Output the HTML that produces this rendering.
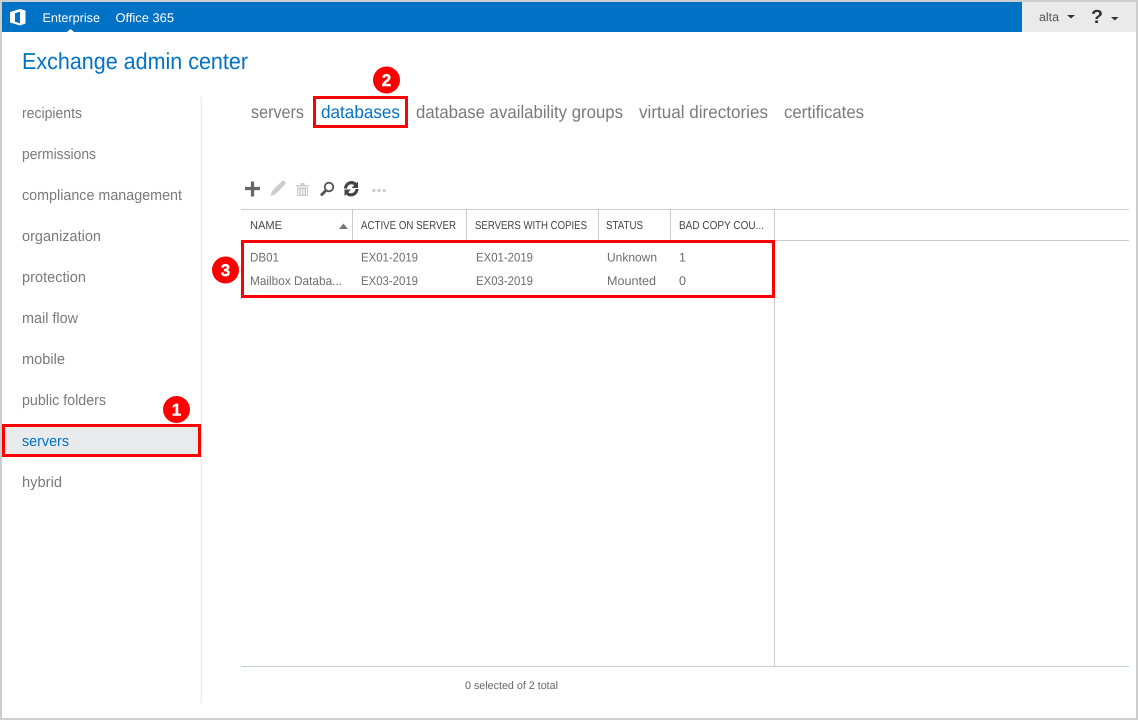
<!DOCTYPE html>
<html><head><meta charset="utf-8"><title>Exchange admin center</title>
<style>
html,body{margin:0;padding:0;width:1138px;height:720px;overflow:hidden;background:#fff}
svg{display:block;position:absolute;left:0;top:0}
text{font-family:"Liberation Sans",sans-serif}
.nav{font-size:15px;fill:#7a7a7a}
.tab{font-size:18px;fill:#7a7a7a}
.hd{font-size:11.500px;fill:#444}
.td{font-size:12.500px;fill:#6e6e6e}
.bn{font-size:17px;font-weight:bold;fill:#fff;text-anchor:middle;stroke:#fff;stroke-width:.4px}
</style></head><body>
<svg width="1138" height="720" viewBox="0 0 1138 720" xmlns="http://www.w3.org/2000/svg" text-rendering="geometricPrecision">
<defs><linearGradient id="g" x1="0" x2="1" y1="0" y2="0"><stop offset="0" stop-color="#fff"/><stop offset="1" stop-color="#e6e6e6"/></linearGradient></defs>
<rect width="1138" height="720" fill="#fff"/>
<!-- top bar -->
<rect x="2" y="2" width="1020" height="30" fill="#0072c6"/>
<rect x="1022" y="2" width="114" height="30" fill="#eaeaea"/>
<path d="M67 32l3.500-3 3.500 3z" fill="#fff"/>
<path fill="#fff" fill-rule="evenodd" d="M10 12L20 9l5.500 1.500V23.500L20 25.500 10 22.500zM15 13.200v8.600l5 1.500V11.800z"/>
<text x="42.500" y="22" font-size="12.500" fill="#fff" textLength="57.500" lengthAdjust="spacingAndGlyphs">Enterprise</text>
<text x="115.500" y="22" font-size="12.500" fill="#fff" textLength="58.500" lengthAdjust="spacingAndGlyphs">Office 365</text>
<text x="1039" y="21" font-size="12" fill="#555" textLength="20" lengthAdjust="spacingAndGlyphs">alta</text>
<path d="M1067 15h8l-4 3.500z" fill="#333"/>
<text x="1091" y="23" font-size="19" font-weight="bold" fill="#333" textLength="12" lengthAdjust="spacingAndGlyphs">?</text>
<path d="M1111 17h7.500l-3.750 3.500z" fill="#333"/>
<!-- title -->
<text x="22" y="69" font-size="23" fill="#0072c6" textLength="226" lengthAdjust="spacingAndGlyphs">Exchange admin center</text>
<!-- sidebar -->
<rect x="200" y="97" width="2" height="606" fill="url(#g)"/>
<rect x="3" y="425" width="197" height="31" fill="#e9eaec"/>
<text class="nav" x="22" y="118" textLength="60" lengthAdjust="spacingAndGlyphs">recipients</text>
<text class="nav" x="22" y="159" textLength="74" lengthAdjust="spacingAndGlyphs">permissions</text>
<text class="nav" x="22" y="200" textLength="160" lengthAdjust="spacingAndGlyphs">compliance management</text>
<text class="nav" x="22" y="241" textLength="79" lengthAdjust="spacingAndGlyphs">organization</text>
<text class="nav" x="22" y="282" textLength="64" lengthAdjust="spacingAndGlyphs">protection</text>
<text class="nav" x="22" y="323" textLength="56" lengthAdjust="spacingAndGlyphs">mail flow</text>
<text class="nav" x="22" y="364" textLength="43" lengthAdjust="spacingAndGlyphs">mobile</text>
<text class="nav" x="22" y="405" textLength="84" lengthAdjust="spacingAndGlyphs">public folders</text>
<text class="nav" x="22" y="446" style="fill:#0072c6" textLength="47" lengthAdjust="spacingAndGlyphs">servers</text>
<text class="nav" x="22" y="487" textLength="40" lengthAdjust="spacingAndGlyphs">hybrid</text>
<!-- tabs -->
<text class="tab" x="251" y="118" textLength="53" lengthAdjust="spacingAndGlyphs">servers</text>
<text class="tab" x="321" y="118" style="fill:#0072c6" textLength="79" lengthAdjust="spacingAndGlyphs">databases</text>
<text class="tab" x="416" y="118" textLength="207" lengthAdjust="spacingAndGlyphs">database availability groups</text>
<text class="tab" x="639" y="118" textLength="129" lengthAdjust="spacingAndGlyphs">virtual directories</text>
<text class="tab" x="784" y="118" textLength="80" lengthAdjust="spacingAndGlyphs">certificates</text>
<!-- toolbar -->
<path d="M245 188.500h15M252.500 181.500v15" stroke="#666" stroke-width="3.200" fill="none"/>
<path d="M270.500 196l1.500-5 9.500-9.500c1-1 2.500-.8 3.300 0s1 2.300 0 3.300L275.300 194.300z" fill="#ccc"/>
<path d="M296 185h13v1.500h-13zM300.500 183h4v2h-4zM297 187.500h11V196h-11z" fill="#ccc"/>
<path d="M298.800 189v6M301.500 189v6M304 189v6M306.500 189v6" stroke="#fff" stroke-width="1" fill="none"/>
<circle cx="329" cy="187" r="4.300" fill="none" stroke="#555" stroke-width="1.800"/>
<path d="M325.800 190.500L321 195.500" stroke="#555" stroke-width="2.800" fill="none"/>
<path d="M345.500 188.500a6 6 0 0 1 10.500-3.800M357 189a6 6 0 0 1-10.500 3.800" fill="none" stroke="#444" stroke-width="3.200"/>
<path d="M358 181.500v6.500h-6.500zM344.500 196v-6.500h6.500z" fill="#444"/>
<circle cx="373.800" cy="190.500" r="1.600" fill="#ccc"/><circle cx="379" cy="190.500" r="1.600" fill="#ccc"/><circle cx="384.200" cy="190.500" r="1.600" fill="#ccc"/>
<!-- table lines -->
<path d="M241 209.500H1129M241 240.500H1129" stroke="#ccc" fill="none"/>
<path d="M352.500 210v30M466.500 210v30M598.500 210v30M670.500 210v30M774.500 210V666" stroke="#ccc" fill="none"/>
<path d="M241 666.500H1129" stroke="#c8d0cc" fill="none"/>
<path d="M339 229l4.500-5.500 4.500 5.500z" fill="#777"/>
<text class="hd" x="250" y="229" textLength="32" lengthAdjust="spacingAndGlyphs">NAME</text>
<text class="hd" x="361" y="229" textLength="95" lengthAdjust="spacingAndGlyphs">ACTIVE ON SERVER</text>
<text class="hd" x="475" y="229" textLength="112" lengthAdjust="spacingAndGlyphs">SERVERS WITH COPIES</text>
<text class="hd" x="606" y="229" textLength="37" lengthAdjust="spacingAndGlyphs">STATUS</text>
<text class="hd" x="679" y="229" textLength="85" lengthAdjust="spacingAndGlyphs">BAD COPY COU...</text>
<text class="td" x="250" y="261.500" textLength="29" lengthAdjust="spacingAndGlyphs">DB01</text>
<text class="td" x="361" y="261.500" textLength="57" lengthAdjust="spacingAndGlyphs">EX01-2019</text>
<text class="td" x="476" y="261.500" textLength="57" lengthAdjust="spacingAndGlyphs">EX01-2019</text>
<text class="td" x="607" y="261.500" textLength="50" lengthAdjust="spacingAndGlyphs">Unknown</text>
<text class="td" x="679" y="261.500">1</text>
<text class="td" x="250" y="285" textLength="92" lengthAdjust="spacingAndGlyphs">Mailbox Databa...</text>
<text class="td" x="361" y="285" textLength="57" lengthAdjust="spacingAndGlyphs">EX03-2019</text>
<text class="td" x="476" y="285" textLength="57" lengthAdjust="spacingAndGlyphs">EX03-2019</text>
<text class="td" x="607" y="285" textLength="49" lengthAdjust="spacingAndGlyphs">Mounted</text>
<text class="td" x="679" y="285" textLength="7" lengthAdjust="spacingAndGlyphs">0</text>
<text x="465" y="689" font-size="11" fill="#666" textLength="93" lengthAdjust="spacingAndGlyphs">0 selected of 2 total</text>
<!-- annotations -->
<g fill="none" stroke="#f00" stroke-width="3">
<rect x="3.500" y="425.500" width="196" height="30"/>
<rect x="314.500" y="97.500" width="92" height="29"/>
<rect x="242.500" y="241.500" width="531" height="55"/>
</g>
<circle cx="176.500" cy="409.500" r="13.500" fill="#f00"/><text class="bn" x="176.500" y="415.500">1</text>
<circle cx="386.500" cy="80" r="13.500" fill="#f00"/><text class="bn" x="386.500" y="86">2</text>
<circle cx="225.500" cy="270" r="13.500" fill="#f00"/><text class="bn" x="225.500" y="276">3</text>
<!-- frame -->
<rect x="1" y="1" width="1136" height="718" fill="none" stroke="#cdcdcd" stroke-width="2"/>
</svg>
</body></html>
